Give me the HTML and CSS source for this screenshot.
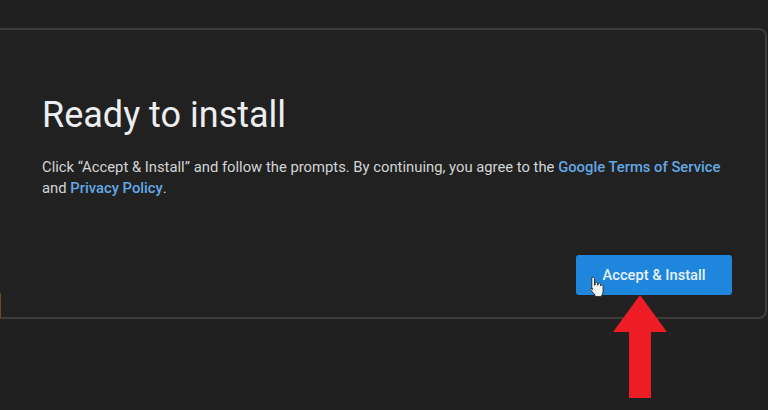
FILE: index.html
```html
<!DOCTYPE html>
<html lang="en">
<head>
<meta charset="utf-8">
<title>Ready to install</title>
<link rel="stylesheet" href="styles.css">
</head>
<body>
<main class="card">
  <h1 class="title">Ready to install</h1>
  <p class="copy">Click “Accept &amp; Install” and follow the prompts. By continuing, you agree to the <a href="#">Google Terms of Service</a> and <a href="#">Privacy Policy</a>.</p>
  <div class="actions">
    <button class="install" type="button">Accept &amp; Install</button>
  </div>
</main>
<span class="edge-mark"></span>
<svg class="cursor" width="22" height="24" viewBox="0 0 22 24" aria-hidden="true">
  <path d="M7 2.2c.9 0 1.500.6 1.500 1.500v6.500l.6-.1V8.600c0-1.700 2.400-1.700 2.500 0v1.500l.5.1v-1c0-1.500 2.300-1.500 2.400.1v1.300l.5.1c.2-1.300 2.100-1.100 2.100.4v4.600c0 2.300-.7 3.300-1.400 4.600v1.300H9v-1.400c-1-1.500-2.500-3-4-5-.8-1.200.5-2.400 1.700-1.500l-.0.8-.9-.5V3.700C5.500 2.800 6.100 2.200 7 2.200z" fill="#f4f4f4" stroke="#26303a" stroke-width="1"/>
</svg>
<svg class="arrow" width="54" height="103" viewBox="0 0 54 103" aria-hidden="true">
  <path d="M27 0 54 37H38V103H16V37H0Z" fill="#ee1c25"/>
</svg>
</body>
</html>
```
FILE: styles.css
```css
html, body {
  margin: 0;
  height: 100%;
}
body {
  position: relative;
  width: 768px;
  height: 410px;
  overflow: hidden;
  background: #202020;
  font-family: Roboto, "Liberation Sans", sans-serif;
  padding-top: 28px;
  box-sizing: border-box;
}
.card {
  box-sizing: border-box;
  width: 777px;
  height: 291px;
  margin-left: -10px;
  padding: 65px 33px 0 50px;
  border: 2px solid #3c3c3c;
  border-radius: 8px;
  background: #212121;
  display: flex;
  flex-direction: column;
}
.title {
  margin: 0;
  font-size: 36px;
  line-height: 40px;
  font-weight: 400;
  color: #eceef0;
}
.copy {
  margin: 22px 0 0;
  width: 690px;
  font-size: 14.8px;
  line-height: 21px;
  color: #d2d4d6;
}
.copy a {
  color: #63a8e6;
  text-decoration: none;
  font-weight: 500;
}
.actions {
  display: flex;
  justify-content: flex-end;
  margin-top: 56px;
}
.install {
  width: 156px;
  height: 40px;
  border: 0;
  border-radius: 3px;
  background: #1e86dc;
  color: #e6f1fb;
  font-family: inherit;
  font-size: 14.7px;
  font-weight: 500;
  padding: 0;
}
.edge-mark {
  position: absolute;
  left: 0;
  top: 293px;
  width: 1px;
  height: 25px;
  background: #6b4a1e;
}
.cursor {
  position: absolute;
  left: 586px;
  top: 275px;
}
.arrow {
  position: absolute;
  left: 613px;
  top: 295px;
}
```
